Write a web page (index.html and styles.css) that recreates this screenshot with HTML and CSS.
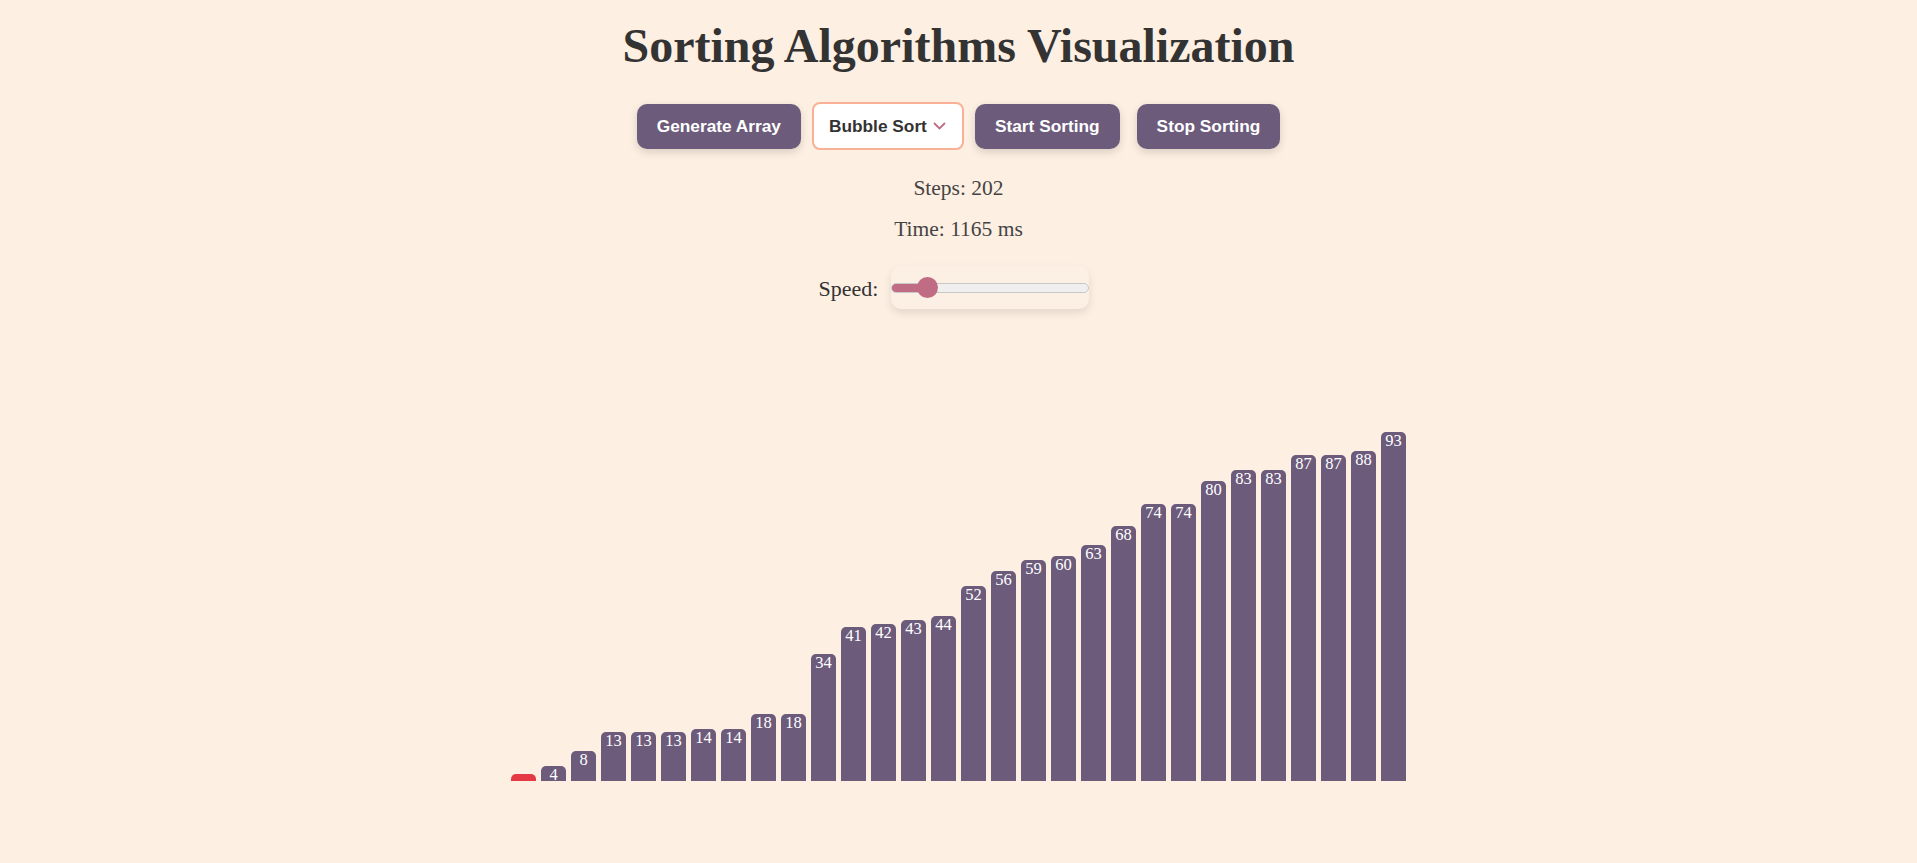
FILE: index.html
```html
<!DOCTYPE html>
<html lang="en">
<head>
<meta charset="utf-8">
<title>Sorting Algorithms Visualization</title>
<link rel="stylesheet" href="styles.css">
</head>
<body>
<main class="app">
  <h1 class="title">Sorting Algorithms Visualization</h1>
  <div class="controls">
    <button class="btn">Generate Array</button>
    <div class="select">
      <span class="select-label">Bubble Sort</span>
      <svg class="chevron" width="13" height="8" viewBox="0 0 13 8"><path d="M1 1 L6.5 6.5 L12 1" fill="none" stroke="#c06c84" stroke-width="1.8"/></svg>
    </div>
    <button class="btn">Start Sorting</button>
    <button class="btn">Stop Sorting</button>
  </div>
  <p class="stat stat-steps">Steps: 202</p>
  <p class="stat stat-time">Time: 1165 ms</p>
  <div class="speed">
    <label class="speed-label" for="speed">Speed:</label>
    <div class="speed-box">
      <input id="speed" class="speed-range" type="range" min="1" max="100" value="15">
    </div>
  </div>
  <div class="bars">
    <div class="bar bar-active" style="height:7.5px"><span class="bar-value">2</span></div>
    <div class="bar" style="height:15px"><span class="bar-value">4</span></div>
    <div class="bar" style="height:30px"><span class="bar-value">8</span></div>
    <div class="bar" style="height:48.75px"><span class="bar-value">13</span></div>
    <div class="bar" style="height:48.75px"><span class="bar-value">13</span></div>
    <div class="bar" style="height:48.75px"><span class="bar-value">13</span></div>
    <div class="bar" style="height:52.5px"><span class="bar-value">14</span></div>
    <div class="bar" style="height:52.5px"><span class="bar-value">14</span></div>
    <div class="bar" style="height:67.5px"><span class="bar-value">18</span></div>
    <div class="bar" style="height:67.5px"><span class="bar-value">18</span></div>
    <div class="bar" style="height:127.5px"><span class="bar-value">34</span></div>
    <div class="bar" style="height:153.75px"><span class="bar-value">41</span></div>
    <div class="bar" style="height:157.5px"><span class="bar-value">42</span></div>
    <div class="bar" style="height:161.25px"><span class="bar-value">43</span></div>
    <div class="bar" style="height:165px"><span class="bar-value">44</span></div>
    <div class="bar" style="height:195px"><span class="bar-value">52</span></div>
    <div class="bar" style="height:210px"><span class="bar-value">56</span></div>
    <div class="bar" style="height:221.25px"><span class="bar-value">59</span></div>
    <div class="bar" style="height:225px"><span class="bar-value">60</span></div>
    <div class="bar" style="height:236.25px"><span class="bar-value">63</span></div>
    <div class="bar" style="height:255px"><span class="bar-value">68</span></div>
    <div class="bar" style="height:277.5px"><span class="bar-value">74</span></div>
    <div class="bar" style="height:277.5px"><span class="bar-value">74</span></div>
    <div class="bar" style="height:300px"><span class="bar-value">80</span></div>
    <div class="bar" style="height:311.25px"><span class="bar-value">83</span></div>
    <div class="bar" style="height:311.25px"><span class="bar-value">83</span></div>
    <div class="bar" style="height:326.25px"><span class="bar-value">87</span></div>
    <div class="bar" style="height:326.25px"><span class="bar-value">87</span></div>
    <div class="bar" style="height:330px"><span class="bar-value">88</span></div>
    <div class="bar" style="height:348.75px"><span class="bar-value">93</span></div>
  </div>
</main>
</body>
</html>
```

FILE: styles.css
```css
html, body {
  margin: 0;
  padding: 0;
}

body {
  background: #fdefe2;
  color: #333333;
  font-family: "Liberation Serif", "DejaVu Serif", serif;
}

.app {
  display: flex;
  flex-direction: column;
  align-items: center;
}

.title {
  margin: 0;
  padding-top: 20px;
  font-size: 48px;
  line-height: 52px;
  font-weight: bold;
  color: #333333;
}

.controls {
  display: flex;
  align-items: center;
  margin-top: 30px;
}

.btn {
  height: 45px;
  padding: 0 20px;
  margin: 0 0 0 11px;
  border: none;
  border-radius: 10px;
  background: #6c5b7b;
  color: #ffffff;
  font-family: "Liberation Sans", Arial, sans-serif;
  font-size: 17.3px;
  font-weight: bold;
  box-shadow: 0 3px 8px rgba(0, 0, 0, 0.15);
  cursor: pointer;
}

.controls .btn:first-child {
  margin-left: 0;
}

.controls .btn + .btn {
  margin-left: 17px;
}

.select {
  display: flex;
  align-items: center;
  justify-content: space-between;
  box-sizing: border-box;
  height: 48px;
  width: 152px;
  margin-left: 11px;
  padding: 0 16px 0 15px;
  border: 2px solid #f8b195;
  border-radius: 8px;
  background: #ffffff;
  color: #333333;
  font-family: "Liberation Sans", Arial, sans-serif;
  font-size: 17.3px;
  font-weight: bold;
}

.chevron {
  display: block;
}

.stat {
  margin: 0;
  font-size: 21.5px;
  line-height: 24px;
  color: #444444;
}

.stat-steps {
  margin-top: 26px;
}

.stat-time {
  margin-top: 17px;
}

.speed {
  display: flex;
  align-items: center;
  gap: 13px;
  margin-top: 25px;
}

.speed-label {
  font-size: 22px;
  line-height: 26px;
  margin-top: 2px;
  color: #333333;
}

.speed-box {
  display: flex;
  align-items: center;
  width: 198px;
  height: 43px;
  margin-right: 9px;
  border-radius: 10px;
  background: #fcefe4;
  box-shadow: 0 4px 8px rgba(0, 0, 0, 0.1);
}

.speed-range {
  -webkit-appearance: none;
  appearance: none;
  box-sizing: border-box;
  width: 198px;
  height: 10px;
  margin: 0;
  border: 1px solid #c8c8c8;
  border-radius: 5px;
  background: linear-gradient(to right, #c06c84 0, #c06c84 27px, #efefef 27px);
  outline: none;
}

.speed-range::-webkit-slider-thumb {
  -webkit-appearance: none;
  appearance: none;
  width: 21px;
  height: 21px;
  border: none;
  border-radius: 50%;
  background: #c06c84;
}

.bars {
  display: flex;
  align-items: flex-end;
  justify-content: center;
  gap: 5px;
  height: 400px;
  margin-top: 72px;
}

.bar {
  width: 25px;
  border-radius: 5px 5px 0 0;
  background: #6c5b7b;
  text-align: center;
}

.bar-active {
  background: #e63946;
}

.bar-value {
  display: block;
  padding-top: 1px;
  font-size: 16.5px;
  line-height: 16px;
  color: #ffffff;
}

.bar-active .bar-value {
  padding-top: 7px;
  font-family: "Liberation Sans", Arial, sans-serif;
  font-weight: bold;
  font-size: 14px;
}
```
